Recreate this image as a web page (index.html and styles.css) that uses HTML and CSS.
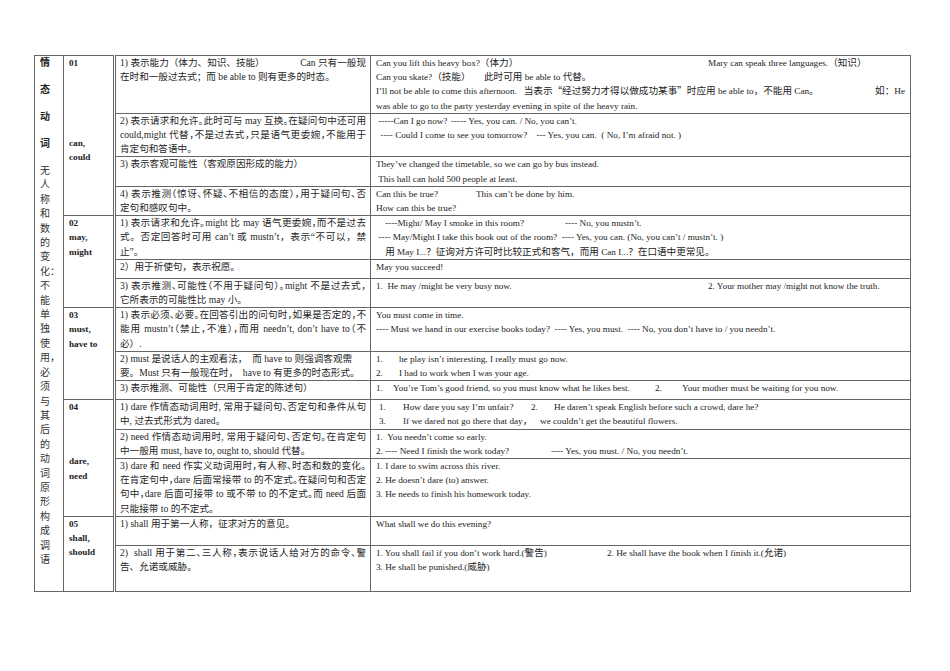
FILE: index.html
```html
<!DOCTYPE html>
<html lang="zh-CN">
<head>
<meta charset="utf-8">
<title>情态动词</title>
<link rel="stylesheet" href="styles.css">
</head>
<body>
<main class="page">
<table class="grammar">
<colgroup><col class="c1"><col class="c2"><col class="c3"><col class="c4"></colgroup>
<tbody>
<tr>
<td class="side" rowspan="15">
<div class="big">情</div><div class="big">态</div><div class="big">动</div><div class="big">词</div>
<div class="vt">无<br>人<br>称<br>和<br>数<br>的<br>变<br>化：<br>不<br>能<br>单<br>独<br>使<br>用，<br>必<br>须<br>与<br>其<br>后<br>的<br>动<br>词<br>原<br>形<br>构<br>成<br>调<br>语</div>
</td>
<td class="verb" rowspan="4"><div>01</div><div class="gap-can">can,<br>could</div></td>
<td class="use"><div class="split"><span>1) 表示能力（体力、知识、技能）</span><span>Can 只有一般现</span></div><div>在时和一般过去式；而 be able to 则有更多的时态。</div></td>
<td class="ex">
<div><span class="t w-mary">Can you lift this heavy box?<span class="zh">（体力）</span></span>Mary can speak three languages.<span class="zh">（知识）</span></div>
<div><span class="t w-skate">Can you skate?<span class="zh">（技能）</span></span><span class="zh">此时可用</span> be able to <span class="zh">代替。</span></div>
<div class="split"><span class="pre">I’ll not be able to come this afternoon.   <span class="zh">当表示“经过努力才得以做成功某事”时应用</span> be able to<span class="zh">，不能用</span> Can<span class="zh">。</span></span><span><span class="zh">如：</span>He</span></div>
<div>was able to go to the party yesterday evening in spite of the heavy rain.</div>
</td>
</tr>
<tr>
<td class="use"><div class="j h">2) 表示请求和允许。此时可与 may 互换。在疑问句中还可用</div><div class="j h">could,might 代替，不是过去式，只是语气更委婉，不能用于</div><div>肯定句和答语中。</div></td>
<td class="ex">
<div><span class="t w-go"> -----Can I go now?</span>----- Yes, you can. / No, you can’t.</div>
<div class="pre">  ---- Could I come to see you tomorrow?    --- Yes, you can.  ( No, I’m afraid not. )</div>
</td>
</tr>
<tr>
<td class="use"><div>3) 表示客观可能性（客观原因形成的能力）</div></td>
<td class="ex">
<div>They’ve changed the timetable, so we can go by bus instead.</div>
<div class="pre"> This hall can hold 500 people at least.</div>
</td>
</tr>
<tr>
<td class="use"><div class="j h">4) 表示推测（惊讶、怀疑、不相信的态度），用于疑问句、否</div><div>定句和感叹句中。</div></td>
<td class="ex">
<div><span class="t w-true">Can this be true?</span>This can’t be done by him.</div>
<div>How can this be true?</div>
</td>
</tr>
<tr>
<td class="verb" rowspan="3"><div>02</div><div>may,<br>might</div></td>
<td class="use"><div class="j h">1) 表示请求和允许。might 比 may 语气更委婉，而不是过去</div><div class="j">式。否定回答时可用 can’t 或 mustn’t，表示“不可以，禁</div><div>止”。</div></td>
<td class="ex">
<div><span class="t w-smoke">    ----Might/ May I smoke in this room?</span>---- No, you mustn’t.</div>
<div class="pre"> ---- May/Might I take this book out of the room?  ---- Yes, you can. (No, you can’t / mustn’t. )</div>
<div class="pre">    <span class="zh">用</span> May I...<span class="zh">？征询对方许可时比较正式和客气，而用</span> Can I...<span class="zh">？在口语中更常见。</span></div>
</td>
</tr>
<tr>
<td class="use h19"><div>2）用于祈使句，表示祝愿。</div></td>
<td class="ex"><div>May you succeed!</div></td>
</tr>
<tr>
<td class="use"><div class="j h">3) 表示推测、可能性（不用于疑问句）。might 不是过去式，</div><div>它所表示的可能性比 may 小。</div></td>
<td class="ex"><div><span class="t w-mary">1.  He may /might be very busy now.</span>2.   Your mother may /might not know the truth.</div></td>
</tr>
<tr>
<td class="verb" rowspan="3"><div>03</div><div>must,<br>have to</div></td>
<td class="use"><div class="j h">1) 表示必须、必要。在回答引出的问句时，如果是否定的，不</div><div class="j h">能用 mustn’t（禁止，不准），而用 needn’t, don’t have to（不</div><div>必）.</div></td>
<td class="ex">
<div>You must come in time.</div>
<div class="pre">---- Must we hand in our exercise books today?  ---- Yes, you must.  ---- No, you don’t have to / you needn’t.</div>
</td>
</tr>
<tr>
<td class="use"><div class="pre">2) must 是说话人的主观看法，  而 have to 则强调客观需</div><div class="pre">要。Must 只有一般现在时，  have to 有更多的时态形式。</div></td>
<td class="ex">
<div><span class="t n23">1.</span>he play isn’t interesting, I really must go now.</div>
<div><span class="t n23">2.</span>I had to work when I was your age.</div>
</td>
</tr>
<tr>
<td class="use h19"><div>3) 表示推测、可能性（只用于肯定的陈述句）</div></td>
<td class="ex"><div><span class="t n17">1.</span><span class="t w-tom">You’re Tom’s good friend, so you must know what he likes best.</span><span class="t n27">2.</span>Your mother must be waiting for you now.</div></td>
</tr>
<tr>
<td class="verb" rowspan="3"><div>04</div><div class="gap-dare">dare,<br>need</div></td>
<td class="use"><div class="j h">1) dare 作情态动词用时, 常用于疑问句、否定句和条件从句</div><div>中, 过去式形式为 dared。</div></td>
<td class="ex">
<div><span class="t n24 i3">1.</span><span class="t w-dare">How dare you say I’m unfair?</span><span class="t n23">2.</span>He daren’t speak English before such a crowd, dare he?</div>
<div><span class="t n24 i3">3.</span><span class="t w-day">If we dared not go there that day<span class="zh">，</span></span>we couldn’t get the beautiful flowers.</div>
</td>
</tr>
<tr>
<td class="use"><div class="j h">2) need 作情态动词用时, 常用于疑问句、否定句。在肯定句</div><div>中一般用 must, have to, ought to, should 代替。</div></td>
<td class="ex">
<div class="pre">1.  You needn’t come so early.</div>
<div><span class="t w-need">2. ---- Need I finish the work today?</span>---- Yes, you must. / No, you needn’t.</div>
</td>
</tr>
<tr>
<td class="use"><div class="j h">3) dare 和 need 作实义动词用时，有人称、时态和数的变化。</div><div class="j h">在肯定句中，dare 后面常接带 to 的不定式。在疑问句和否定</div><div class="j h">句中，dare 后面可接带 to 或不带 to 的不定式。而 need 后面</div><div>只能接带 to 的不定式。</div></td>
<td class="ex">
<div>1. I dare to swim across this river.</div>
<div>2. He doesn’t dare (to) answer.</div>
<div>3. He needs to finish his homework today.</div>
</td>
</tr>
<tr>
<td class="verb" rowspan="2"><div>05</div><div>shall,<br>should</div></td>
<td class="use h29"><div>1) shall 用于第一人称，征求对方的意见。</div></td>
<td class="ex"><div>What shall we do this evening?</div></td>
</tr>
<tr>
<td class="use h46"><div class="j h">2)&nbsp; shall 用于第二、三人称，表示说话人给对方的命令、警</div><div>告、允诺或威胁。</div></td>
<td class="ex">
<div><span class="t w-shall">1. You shall fail if you don’t work hard.(<span class="zh">警告</span>)</span>2. He shall have the book when I finish it.(<span class="zh">允诺</span>)</div>
<div>3. He shall be punished.(<span class="zh">威胁</span>)</div>
</td>
</tr>
</tbody>
</table>
</main>
</body>
</html>
```

FILE: styles.css
```css
* { box-sizing: border-box; }
html, body { margin: 0; background: #ffffff; }
body {
  font-family: "Liberation Serif", "Noto Sans CJK SC", serif;
  font-size: 9.2px;
  line-height: 14.2px;
  color: #1d1d1d;
}
.page { padding: 55px 0 0 34px; }

.grammar {
  border-collapse: collapse;
  table-layout: fixed;
  width: 876px;
}
.c1 { width: 29px; }
.c2 { width: 51px; }
.c3 { width: 256px; }
.c4 { width: 540px; }

.grammar td {
  border: 1px solid #666666;
  vertical-align: top;
  padding: 0 5px;
}

.side {
  font-size: 10px;
  line-height: 14.4px;
  color: #333333;
}
.side .big {
  font-weight: bold;
  color: #1d1d1d;
  margin-bottom: 12.6px;
}

.verb { font-weight: bold; }
.gap-can { margin-top: 66px; }
.gap-dare { margin-top: 40px; }

.grammar td.use {
  border-left: 3px double #666666;
  padding: 0 4px 0 4px;
  font-size: 9.6px;
  color: #262626;
}
.grammar td.h19 { height: 19px; }
.grammar td.h29 { height: 29px; }
.grammar td.h46 { height: 46px; }

.h { font-feature-settings: "halt"; }
.j { text-align: justify; text-align-last: justify; }
.split { display: flex; justify-content: space-between; }
.pre { white-space: pre; }

.zh {
  font-family: "Noto Sans CJK SC", sans-serif;
  font-size: 9.6px;
  line-height: 1;
}

.t { display: inline-block; white-space: pre; }
.w-mary { width: 332px; }
.w-skate { width: 108px; }
.w-true { width: 100px; }
.w-smoke { width: 189px; }
.w-go { width: 75px; }
.w-tom { width: 262px; }
.w-dare { width: 128px; }
.w-day { width: 137px; }
.w-need { width: 175px; }
.w-shall { width: 231px; }
.n17 { width: 17px; }
.n23 { width: 23px; }
.n24 { width: 24px; }
.n27 { width: 27px; }
.i3 { margin-left: 3px; }
```
